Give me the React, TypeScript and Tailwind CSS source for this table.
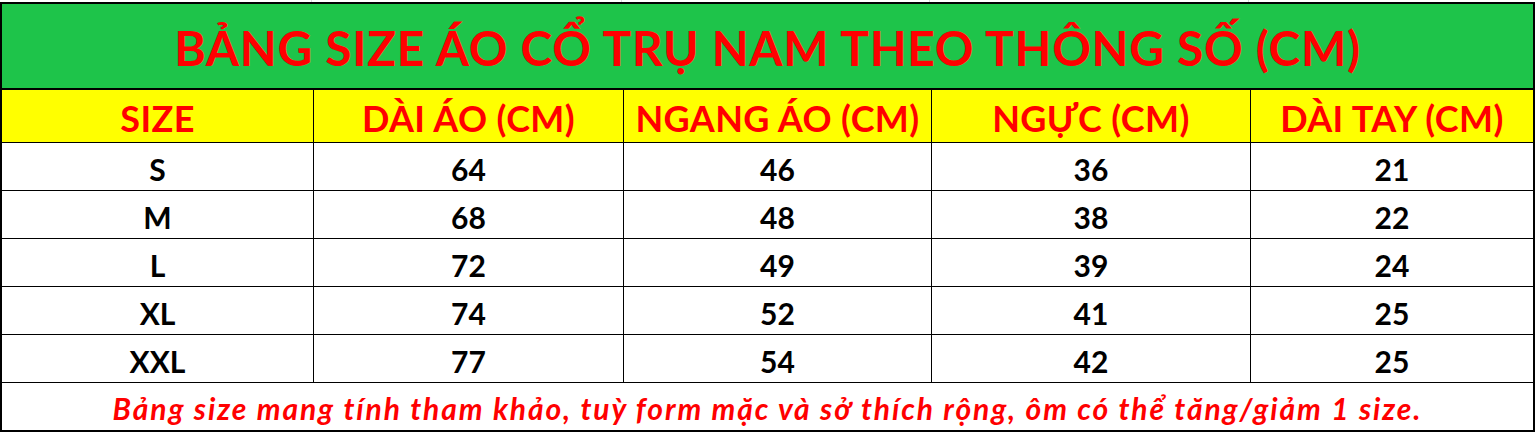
import React from "react";

const cols = ["w-[312px]", "w-[310px]", "w-[308px]", "w-[319px]", "flex-1"];

const headers = ["SIZE", "DÀI ÁO (CM)", "NGANG ÁO (CM)", "NGỰC (CM)", "DÀI TAY (CM)"];

const rows = [
  ["S", "64", "46", "36", "21"],
  ["M", "68", "48", "38", "22"],
  ["L", "72", "49", "39", "24"],
  ["XL", "74", "52", "41", "25"],
  ["XXL", "77", "54", "42", "25"],
];

const font = { fontFamily: "Lato, 'Noto Sans', sans-serif" };

export default function App() {
  return (
    <div className="w-[1536px] h-[433px] bg-white overflow-hidden" style={font}>
      {/* sheet gridlines above the table */}
      <div className="flex h-[2px]">
        {cols.map((c, i) => (
          <div key={i} className={`${c} h-full ${i < 4 ? "border-r border-[#dadada]" : ""}`} />
        ))}
      </div>

      <div className="w-[1535px] border-2 border-black">
        <div className="h-[86px] bg-[#1ec44a] border-b-2 border-black flex items-center justify-center">
          <h1 className="text-[48px] font-bold text-[#ff0000] tracking-[0.65px] leading-none pt-[4px]">
            BẢNG SIZE ÁO CỔ TRỤ NAM THEO THÔNG SỐ (CM)
          </h1>
        </div>

        <div className="flex h-[53px] bg-[#ffff00] border-b border-black">
          {headers.map((h, i) => (
            <div
              key={h}
              className={`${cols[i]} ${i < 4 ? "border-r border-black" : ""} flex items-center justify-center text-[36px] font-bold text-[#ff0000] tracking-[0.4px] leading-none pt-[3px]`}
            >
              {h}
            </div>
          ))}
        </div>

        {rows.map((r) => (
          <div key={r[0]} className="flex h-[48px] border-b border-black">
            {r.map((v, i) => (
              <div
                key={i}
                className={`${cols[i]} ${i < 4 ? "border-r border-black" : ""} flex items-center justify-center text-[30px] font-bold text-black leading-none pt-[4px]`}
              >
                {v}
              </div>
            ))}
          </div>
        ))}

        <div className="h-[47px] flex items-center justify-center">
          <p className="text-[30px] font-bold italic text-[#ff0000] tracking-[1.9px] leading-none pt-[2px]">
            Bảng size mang tính tham khảo, tuỳ form mặc và sở thích rộng, ôm có thể tăng/giảm 1 size.
          </p>
        </div>
      </div>
    </div>
  );
}
